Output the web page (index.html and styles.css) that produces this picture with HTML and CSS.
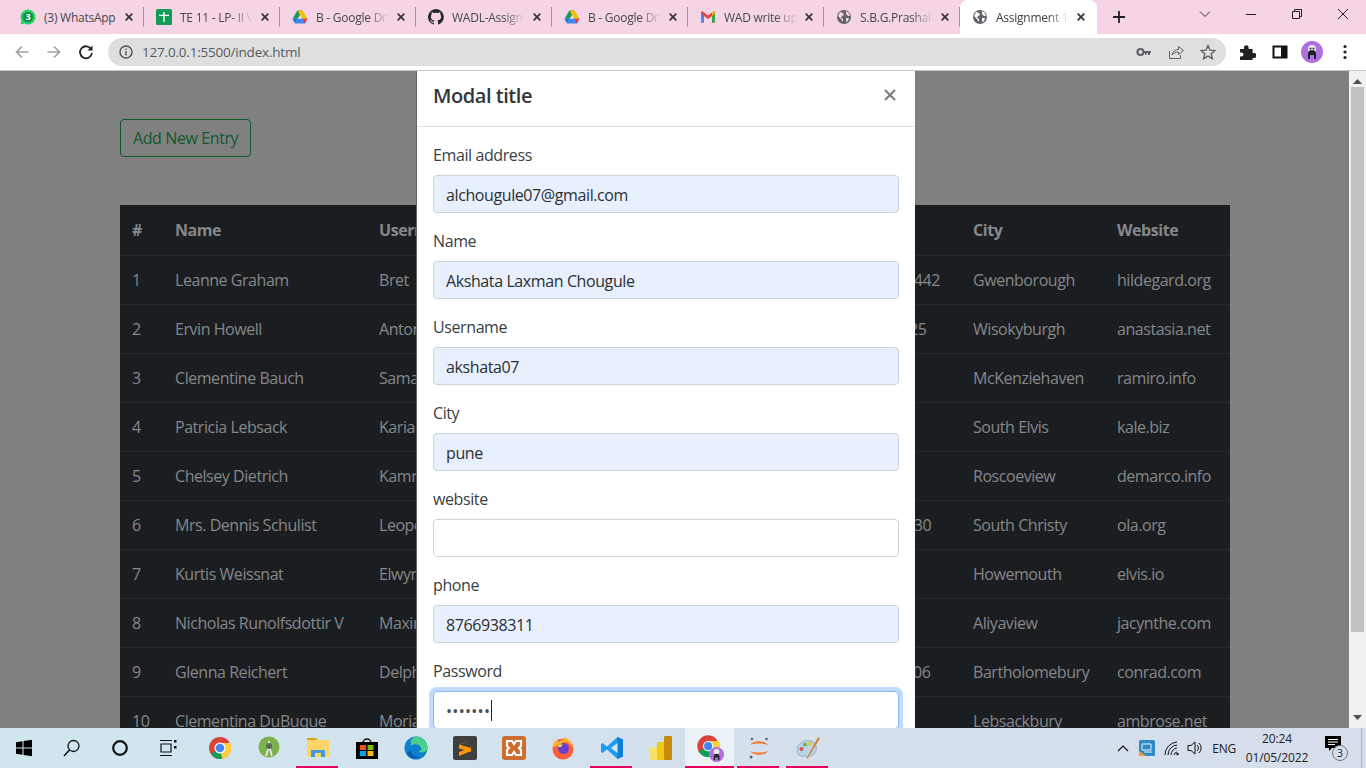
FILE: index.html
```html
<!DOCTYPE html>
<html lang="en">
<head>
  <meta charset="UTF-8">
  <meta name="viewport" content="width=device-width, initial-scale=1.0">
  <title>Assignment 1</title>
  <link rel="stylesheet" href="styles.css">
</head>
<body>
  <div class="tabstrip">
    <div class="tab">
      <svg class="fav" viewBox="0 0 16 16"><path d="M8 .5a7.500 7.500 0 0 0-6.400 11.300L.5 15.500l3.800-1A7.500 7.500 0 1 0 8 .5z" fill="#25d366"/><circle cx="8" cy="8" r="5.200" fill="#0f8f45"/><text x="8" y="11" text-anchor="middle" class="fav-num">3</text></svg>
      <span class="tab-title">(3) WhatsApp</span><svg class="tab-x" viewBox="0 0 8 8"><path d="M.7.7l6.600 6.600M7.300.7L.7 7.300"/></svg>
    </div>
    <div class="tab">
      <svg class="fav" viewBox="0 0 16 16"><rect width="16" height="16" rx="1.500" fill="#0f9d58"/><path d="M7.300 3h1.400v2.700H13v1.400H8.700V13H7.300V7.100H3V5.700h4.300z" fill="#fff"/></svg>
      <span class="tab-title fade">TE 11 - LP- II Viva</span><svg class="tab-x" viewBox="0 0 8 8"><path d="M.7.7l6.600 6.600M7.300.7L.7 7.300"/></svg>
    </div>
    <div class="tab">
      <svg class="fav" viewBox="0 0 16 16"><path d="M5.500 1.500h5L5.700 9.800H.5z" fill="#0f9d58"/><path d="M5.500 1.500h5l5 8.300h-5z" fill="#fbbc04"/><path d="M3 14.500l2.700-4.700h9.800L13 14.500z" fill="#4285f4"/><path d="M.5 9.800h5.200L3 14.500z" fill="#1a73e8"/><path d="M10.500 9.800h5L13 14.500z" fill="#ea4335"/></svg>
      <span class="tab-title fade">B - Google Drive</span><svg class="tab-x" viewBox="0 0 8 8"><path d="M.7.7l6.600 6.600M7.300.7L.7 7.300"/></svg>
    </div>
    <div class="tab">
      <svg class="fav" viewBox="0 0 16 16"><path fill="#24292f" d="M8 0a8 8 0 0 0-2.500 15.600c.4.100.5-.2.500-.4v-1.400c-2.200.5-2.700-1-2.700-1-.4-.9-.9-1.200-.9-1.200-.7-.5.100-.5.100-.5.8.100 1.200.8 1.200.8.700 1.200 1.900.9 2.300.7.100-.5.300-.9.500-1.100-1.800-.2-3.600-.9-3.600-4 0-.9.300-1.600.8-2.100-.1-.2-.4-1 .1-2.100 0 0 .7-.2 2.200.8a7.600 7.600 0 0 1 4 0c1.500-1 2.200-.8 2.200-.8.400 1.100.2 1.900.1 2.100.5.600.8 1.300.8 2.100 0 3.100-1.900 3.700-3.700 3.900.3.300.6.800.6 1.500v2.200c0 .2.100.5.600.4A8 8 0 0 0 8 0z"/></svg>
      <span class="tab-title fade">WADL-Assignment</span><svg class="tab-x" viewBox="0 0 8 8"><path d="M.7.7l6.600 6.600M7.300.7L.7 7.300"/></svg>
    </div>
    <div class="tab">
      <svg class="fav" viewBox="0 0 16 16"><path d="M5.500 1.500h5L5.700 9.800H.5z" fill="#0f9d58"/><path d="M5.500 1.500h5l5 8.300h-5z" fill="#fbbc04"/><path d="M3 14.500l2.700-4.700h9.800L13 14.500z" fill="#4285f4"/><path d="M.5 9.800h5.200L3 14.500z" fill="#1a73e8"/><path d="M10.500 9.800h5L13 14.500z" fill="#ea4335"/></svg>
      <span class="tab-title fade">B - Google Drive</span><svg class="tab-x" viewBox="0 0 8 8"><path d="M.7.7l6.600 6.600M7.300.7L.7 7.300"/></svg>
    </div>
    <div class="tab">
      <svg class="fav" viewBox="0 0 16 16"><path d="M1 3.500v10h3V7l4 3 4-3v6.500h3v-10L14 2 8 6.500 2 2z" fill="#ea4335"/><path d="M1 3.500v10h3V7z" fill="#4285f4"/><path d="M12 7v6.500h3v-10z" fill="#34a853"/><path d="M14 2l1 1.500L12 7V3.500z" fill="#fbbc04"/></svg>
      <span class="tab-title fade">WAD write up - m</span><svg class="tab-x" viewBox="0 0 8 8"><path d="M.7.7l6.600 6.600M7.300.7L.7 7.300"/></svg>
    </div>
    <div class="tab">
      <svg class="fav" viewBox="0 0 16 16"><circle cx="8" cy="8" r="7" fill="#5f6368"/><path d="M4 3l3 1 1 2-2 1-1 2 2 1v3L4 9 2 7zM10 2l3 2 1 3-2 0-2-2zM10 9l3 0-1 3-2 1z" fill="#f5d5e5"/></svg>
      <span class="tab-title fade">S.B.G.Prashala</span><svg class="tab-x" viewBox="0 0 8 8"><path d="M.7.7l6.600 6.600M7.300.7L.7 7.300"/></svg>
    </div>
    <div class="tab tab-active">
      <svg class="fav" viewBox="0 0 16 16"><circle cx="8" cy="8" r="7" fill="#5f6368"/><path d="M4 3l3 1 1 2-2 1-1 2 2 1v3L4 9 2 7zM10 2l3 2 1 3-2 0-2-2zM10 9l3 0-1 3-2 1z" fill="#fff"/></svg>
      <span class="tab-title fade">Assignment 1 page</span><svg class="tab-x" viewBox="0 0 8 8"><path d="M.7.7l6.600 6.600M7.300.7L.7 7.300"/></svg>
    </div>
    <svg class="new-tab" viewBox="0 0 12 12"><path d="M6 0v12M0 6h12" stroke="#202124" stroke-width="1.800" fill="none"/></svg>
    <div class="win-controls">
      <svg viewBox="0 0 12 12"><path d="M1 3.500l5 5 5-5" stroke="#333" fill="none"/></svg>
      <svg viewBox="0 0 12 12"><path d="M1 6.500h10" stroke="#222" fill="none"/></svg>
      <svg viewBox="0 0 12 12"><path d="M1.500 3.500h7v7h-7zM3.500 3.500v-2h7v7h-2" stroke="#222" fill="none"/></svg>
      <svg viewBox="0 0 12 12"><path d="M1 1l10 10M11 1L1 11" stroke="#222" fill="none"/></svg>
    </div>
  </div>

  <div class="toolbar">
    <svg class="tool-btn" viewBox="0 0 16 16"><path d="M14.500 8H2.500M8 2.500L2.500 8 8 13.500" stroke="#a2a2a2" stroke-width="1.700" fill="none"/></svg>
    <svg class="tool-btn" viewBox="0 0 16 16"><path d="M1.500 8h12M8 2.500L13.500 8 8 13.500" stroke="#a2a2a2" stroke-width="1.700" fill="none"/></svg>
    <svg class="tool-btn" viewBox="0 0 16 16"><path d="M13.200 5.200A6 6 0 1 0 14 9" stroke="#222" stroke-width="1.800" fill="none"/><path d="M14.500 1.500v5h-5z" fill="#222"/></svg>
    <div class="omnibox">
      <svg class="omni-info" viewBox="0 0 14 14"><circle cx="7" cy="7" r="6" stroke="#555" stroke-width="1.400" fill="none"/><path d="M7 6v4.500M7 3.500v1.400" stroke="#555" stroke-width="1.400"/></svg>
      <span class="url">127.0.0.1:5500/index.html</span>
      <div class="omni-actions">
        <svg viewBox="0 0 16 16"><circle cx="4.500" cy="8" r="3" fill="none" stroke="#5f6368" stroke-width="2.200"/><path d="M7 7h8v2h-1v2h-2V9h-1v1.500H9V9H7z" fill="#5f6368"/></svg>
        <svg viewBox="0 0 16 16"><path d="M1.500 7v7.500h11V11" stroke="#5f6368" fill="none"/><path d="M4 11c.5-3.500 3-5.500 6.500-5.500V2.500L15.500 6.500l-5 4V8C7.500 8 5.500 9 4 11z" stroke="#5f6368" fill="none"/></svg>
        <svg viewBox="0 0 16 16"><path d="M8 1.500l2 4.600 5 .4-3.800 3.300 1.200 4.900L8 12.100l-4.400 2.600 1.200-4.900L1 6.500l5-.4z" stroke="#5f6368" stroke-width="1.400" fill="none"/></svg>
      </div>
    </div>
    <svg class="tool-ext" viewBox="0 0 16 16"><path d="M0 5h4V3.500a2.300 2.300 0 0 1 4.600 0V5h4v4H14a2.500 2.500 0 0 1 0 5h-1.400v2H0v-3.500h1.500a2 2 0 0 0 0-4H0z" fill="#202124"/></svg>
    <svg class="tool-ext" viewBox="0 0 16 16"><rect x="1.500" y="2.500" width="13" height="11" fill="none" stroke="#111" stroke-width="2"/><rect x="9" y="2.500" width="5" height="11" fill="#111"/></svg>
    <svg class="avatar" viewBox="0 0 22 22"><circle cx="11" cy="11" r="11" fill="#b06fe0"/><circle cx="11" cy="8" r="4" fill="#eee"/><circle cx="9.500" cy="7.500" r="1" fill="#222"/><circle cx="12.500" cy="7.500" r="1" fill="#222"/><path d="M7 18v-5a4 4 0 0 1 8 0v5h-2v-4h-4v4z" fill="#222"/></svg>
    <svg class="tool-dots" viewBox="0 0 4 16"><circle cx="2" cy="2.500" r="1.600" fill="#222"/><circle cx="2" cy="8" r="1.600" fill="#222"/><circle cx="2" cy="13.500" r="1.600" fill="#222"/></svg>
  </div>

  <div class="viewport">
    <main class="page">
      <button class="btn-add">Add New Entry</button>
      <table class="users">
        <colgroup>
          <col class="c-id"><col class="c-name"><col class="c-user"><col class="c-mail"><col class="c-phone"><col class="c-city"><col class="c-web">
        </colgroup>
        <thead>
          <tr><th>#</th><th>Name</th><th>Username</th><th>Email</th><th>Phone</th><th>City</th><th>Website</th></tr>
        </thead>
        <tbody>
          <tr><td>1</td><td>Leanne Graham</td><td>Bret</td><td>Sincere@april.biz</td><td>1-770-736-8031 x56442</td><td>Gwenborough</td><td>hildegard.org</td></tr>
          <tr><td>2</td><td>Ervin Howell</td><td>Antonette</td><td>Shanna@melissa.tv</td><td>010-692-6593 x09125</td><td>Wisokyburgh</td><td>anastasia.net</td></tr>
          <tr><td>3</td><td>Clementine Bauch</td><td>Samantha</td><td>Nathan@yesenia.net</td><td>1-463-123-4447</td><td>McKenziehaven</td><td>ramiro.info</td></tr>
          <tr><td>4</td><td>Patricia Lebsack</td><td>Karianne</td><td>Julianne.OConner@kory.org</td><td>493-170-9623</td><td>South Elvis</td><td>kale.biz</td></tr>
          <tr><td>5</td><td>Chelsey Dietrich</td><td>Kamren</td><td>Lucio_Hettinger@annie.ca</td><td>(254)954-1289</td><td>Roscoeview</td><td>demarco.info</td></tr>
          <tr><td>6</td><td>Mrs. Dennis Schulist</td><td>Leopoldo_Corkery</td><td>Karley_Dach@jasper.info</td><td>1-477-935-8478 x6430</td><td>South Christy</td><td>ola.org</td></tr>
          <tr><td>7</td><td>Kurtis Weissnat</td><td>Elwyn.Skiles</td><td>Telly.Hoeger@billy.biz</td><td>210.067.6132</td><td>Howemouth</td><td>elvis.io</td></tr>
          <tr><td>8</td><td>Nicholas Runolfsdottir V</td><td>Maxime_Nienow</td><td>Sherwood@rosamond.me</td><td>586.493.6943</td><td>Aliyaview</td><td>jacynthe.com</td></tr>
          <tr><td>9</td><td>Glenna Reichert</td><td>Delphine</td><td>Chaim_McDermott@dana.io</td><td>(775)976-6794 x41206</td><td>Bartholomebury</td><td>conrad.com</td></tr>
          <tr><td>10</td><td>Clementina DuBuque</td><td>Moriah.Stanton</td><td>Rey.Padberg@karina.biz</td><td>024-648-3804</td><td>Lebsackbury</td><td>ambrose.net</td></tr>
        </tbody>
      </table>
    </main>

    <div class="scrollbar">
      <svg class="arrow" viewBox="0 0 9 5"><path d="M4.500 0L9 5H0z" fill="#505050"/></svg>
      <div class="thumb-track"><div class="thumb"></div></div>
      <svg class="arrow" viewBox="0 0 9 5"><path d="M0 0h9L4.500 5z" fill="#505050"/></svg>
    </div>

    <div class="modal">
      <div class="modal-header">
        <h5 class="modal-title">Modal title</h5>
        <svg class="modal-close" viewBox="0 0 12 12"><path d="M1 1l10 10M11 1L1 11" stroke="#7c7f82" stroke-width="2.200" fill="none"/></svg>
      </div>
      <form class="modal-body">
        <div class="field"><label>Email address</label><input class="autofilled" value="alchougule07@gmail.com"></div>
        <div class="field"><label>Name</label><input class="autofilled" value="Akshata Laxman Chougule"></div>
        <div class="field"><label>Username</label><input class="autofilled" value="akshata07"></div>
        <div class="field"><label>City</label><input class="autofilled" value="pune"></div>
        <div class="field"><label>website</label><input value=""></div>
        <div class="field"><label>phone</label><input class="autofilled" value="8766938311"></div>
        <div class="field"><label>Password</label>
          <div class="pw-wrap"><input class="focused" type="password" value="akshata"><span class="caret"></span></div>
        </div>
      </form>
    </div>
  </div>

  <footer class="taskbar">
    <div class="task-left">
      <span class="task"><svg viewBox="0 0 18 18"><path d="M1 3.200l6.500-1v6.300H1zM8.500 2l8.500-1.300v7.800H8.500zM1 9.500h6.500v6.300l-6.500-1zM8.500 9.500H17v7.800L8.500 16z" fill="#000"/></svg></span>
      <span class="task"><svg viewBox="0 0 18 18"><circle cx="10.500" cy="7" r="5.500" stroke="#111" stroke-width="1.300" fill="none"/><path d="M6.500 11l-5.500 6" stroke="#111" stroke-width="1.500"/></svg></span>
      <span class="task"><svg viewBox="0 0 18 18"><circle cx="9" cy="9" r="6.800" stroke="#111" stroke-width="2.200" fill="none"/></svg></span>
      <span class="task"><svg viewBox="0 0 18 18"><path d="M1 1.500h12M1 16.500h12M2 5h10v8H2z" stroke="#111" stroke-width="1.200" fill="none"/><rect x="15" y="1" width="2.500" height="2.500" fill="#111"/><rect x="15" y="7" width="2.500" height="2.500" fill="#111"/></svg></span>
      <span class="task task-big first-big"><svg viewBox="0 0 24 24"><circle cx="12" cy="12" r="11" fill="#db4437"/><path d="M12 12L3 17.500A11 11 0 0 0 14 23z" fill="#0f9d58"/><path d="M12 7h10a11 11 0 0 1-8 16z" fill="#ffcd40"/><circle cx="12" cy="12" r="5.500" fill="#fff"/><circle cx="12" cy="12" r="4.300" fill="#4285f4"/></svg></span>
      <span class="task task-big"><svg viewBox="0 0 24 24"><circle cx="12" cy="11" r="10.500" fill="#7cb24b"/><path d="M12 5v3M9 20l3-10 3 10" stroke="#e6e6e6" stroke-width="1.800" fill="none"/><circle cx="12" cy="10" r="3" fill="#5b6b4f"/></svg></span>
      <span class="task task-big on"><svg viewBox="0 0 24 24"><path d="M1 2h9l2 2H1z" fill="#d9a520"/><path d="M1 4h22v17H1z" fill="#fbd667"/><path d="M5 21v-7h14v7h-4v-4H9v4z" fill="#3f9ade"/></svg></span>
      <span class="task task-big"><svg viewBox="0 0 24 24"><path d="M8 7a4 4 0 0 1 8 0" stroke="#111" stroke-width="1.500" fill="none"/><path d="M1 6h22v17H1z" fill="#000"/><rect x="5" y="9" width="6" height="5" fill="#f25022"/><rect x="12.500" y="9" width="6" height="5" fill="#7fba00"/><rect x="5" y="15" width="6" height="5" fill="#00a4ef"/><rect x="12.500" y="15" width="6" height="5" fill="#ffb900"/></svg></span>
      <span class="task task-big"><svg viewBox="0 0 24 24"><circle cx="12" cy="12" r="11.500" fill="#0f7fcf"/><path d="M12 .5A11.500 11.500 0 0 1 23.500 12c0 3-3 4.500-6 4.500-2.500 0-3.500-1-3.500-1 3 0 3.500-2 3-3.500C16 8 10 7 6.500 10 8 6 4 3 12 .5z" fill="#4bd08a"/><path d="M7 14c0 5 5 8 10 7-2 2-11 3-14-4z" fill="#0a5ca8"/></svg></span>
      <span class="task task-big"><svg viewBox="0 0 24 24"><rect width="24" height="24" rx="2" fill="#3f3f3f"/><path d="M18 4L6 9v3.500l12 3.500v-4L6 8.500M18 11.500L6 16v4l12-5" fill="#ff9800"/></svg></span>
      <span class="task task-big"><svg viewBox="0 0 24 24"><rect width="24" height="24" rx="3" fill="#cf6c2c"/><path d="M5 5h5l2 3 2-3h5v5l-2 2 2 2v5h-5l-2-3-2 3H5v-5l2-2-2-2z" fill="none" stroke="#fff" stroke-width="2.200"/></svg></span>
      <span class="task task-big"><svg viewBox="0 0 24 24"><circle cx="12" cy="13" r="10.500" fill="#ff5c39"/><circle cx="12.500" cy="12.500" r="5.500" fill="#6a3fd0"/><path d="M1.500 11C2 6 5 4 7 3.500 6.500 5 7 6 8 6.500 9.500 4 13 4 14 1c3 2 8 5 8 11-2-4-5-6-8-6-2 0-3.500 1-4 2-2 0-4 .5-5 2-.5.500-2 1-3.500 1z" fill="#ffb52e"/><path d="M7 8.500h5l-2 2.500H7z" fill="#ffcf50"/></svg></span>
      <span class="task task-big on"><svg viewBox="0 0 24 24"><path d="M17.500 1L23 3.500v17L17.500 23 7 13.500 2.500 17 1 16V8l1.500-1L7 10.500z" fill="#1f9cf0"/><path d="M17.500 1L23 3.500v17L17.500 23z" fill="#0f7fd0"/><path d="M17.500 7v10L11 12z" fill="#d2e5ee"/></svg></span>
      <span class="task task-big"><svg viewBox="0 0 24 24"><rect x="1" y="11" width="8" height="13" rx="1" fill="#f7e36b"/><rect x="8" y="6" width="8" height="18" rx="1" fill="#f2c811"/><rect x="15" y="0" width="8" height="24" rx="1" fill="#c98c0a"/></svg></span>
      <span class="task task-big task-active"><svg class="task-chrome" viewBox="0 0 32 32"><circle cx="14" cy="14" r="11.500" fill="#db4437"/><path d="M14 14L4 19.500A11.500 11.500 0 0 0 16 25.500z" fill="#0f9d58"/><path d="M14 8.500h11.500a11.500 11.500 0 0 1-9 17z" fill="#ffcd40"/><circle cx="14" cy="14" r="5.500" fill="#fff"/><circle cx="14" cy="14" r="4.300" fill="#4285f4"/><circle cx="23" cy="23" r="8" fill="#b06fe0"/><circle cx="23" cy="20" r="3" fill="#eee"/><path d="M20 29v-4a3 3 0 0 1 6 0v4h-1.500v-3h-3v3z" fill="#222"/></svg></span>
      <span class="task task-big on"><svg viewBox="0 0 24 24"><path d="M3 9c4-5 14-5 18 0-4-2-14-2-18 0zM3 15c4 5 14 5 18 0-4 2-14 2-18 0z" fill="#f37626"/><circle cx="5" cy="3" r="1.300" fill="#666"/><circle cx="19.500" cy="3" r="1.300" fill="#666"/><circle cx="4" cy="21" r="1.500" fill="#666"/></svg></span>
      <span class="task task-big on"><svg viewBox="0 0 24 24"><path d="M1 14C1 7 9 3 15 5c6 2 7 9 3 13-4 4-8 2-12 2-3 0-5-2-5-6z" fill="#b9d4e8" stroke="#7a97ad" stroke-width=".6"/><circle cx="5.500" cy="13" r="2" fill="#d9534f"/><circle cx="9" cy="8.500" r="2" fill="#6fb54a"/><circle cx="14" cy="7.500" r="2" fill="#f2c230"/><path d="M22 1l2 1.500L12 22l-2 1z" fill="#d08a3a"/></svg></span>
    </div>
    <div class="tray">
      <svg class="tray-up" viewBox="0 0 12 7"><path d="M1 6l5-5 5 5" stroke="#111" stroke-width="1.200" fill="none"/></svg>
      <svg class="tray-app" viewBox="0 0 16 16"><rect width="16" height="16" rx="1.500" fill="#2e8bc9"/><path d="M0 11l7 5H1.500A1.500 1.500 0 0 1 0 14.500z" fill="#f0a030"/><path d="M3 4h9v6H3zM5 12h8" fill="none" stroke="#e6f2fa"/></svg>
      <svg class="tray-icon" viewBox="0 0 16 16"><path d="M1 15A13 13 0 0 1 13 2M4 15A10 10 0 0 1 13 5M7 15a7 7 0 0 1 6-7M10 15a4 4 0 0 1 3-3" stroke="#111" fill="none"/><circle cx="13.500" cy="14" r="1.200" fill="#111"/></svg>
      <svg class="tray-icon tray-vol" viewBox="0 0 16 16"><path d="M1 5.500h3L8 2v12L4 10.500H1z" stroke="#111" fill="none"/><path d="M10 5a4 4 0 0 1 0 6M12 3a7 7 0 0 1 0 10" stroke="#111" fill="none"/></svg>
      <span class="tray-lang">ENG</span>
      <div class="clock"><span>20:24</span><span>01/05/2022</span></div>
      <div class="notify">
        <svg viewBox="0 0 16 16"><path d="M0 0h16v12H7l-3 3v-3H0z" fill="#000"/><path d="M3 3.500h10M3 6h10M3 8.500h7" stroke="#fff"/></svg>
        <span class="notify-count">3</span>
      </div>
      <span class="show-desktop"></span>
    </div>
  </footer>
</body>
</html>
```

FILE: styles.css
```css
* {
  box-sizing: border-box;
}
html, body {
  height: 100%;
}
body {
  margin: 0;
  overflow: hidden;
  display: flex;
  flex-direction: column;
  font-family: "Open Sans", "Noto Sans", sans-serif;
  color: #212529;
}

/* tabs */
.tabstrip {
  height: 34px;
  flex: none;
  display: flex;
  align-items: center;
  padding-left: 8px;
  background: #f5d5e5;
}
.tab {
  width: 136px;
  height: 34px;
  flex: none;
  display: flex;
  align-items: center;
  padding: 0 11px 0 12px;
  background: linear-gradient(#a69aa1, #a69aa1) right center / 1px 20px no-repeat;
  font-size: 12px;
  letter-spacing: -0.25px;
  color: #45494d;
}
.tab-active {
  width: 137px;
  padding-right: 12px;
  background: #fff;
  border-radius: 8px 8px 0 0;
  color: #3c4043;
}
.fav {
  width: 16px;
  height: 16px;
  flex: none;
  margin-right: 8px;
}
.fav-num {
  font-size: 9px;
  font-weight: 700;
  fill: #fff;
  letter-spacing: 0;
}
.tab-title {
  flex: 1;
  min-width: 0;
  margin-right: 4px;
  white-space: nowrap;
  overflow: hidden;
}
.fade {
  margin-right: 8px;
  -webkit-mask-image: linear-gradient(to right, #000 70%, transparent);
  mask-image: linear-gradient(to right, #000 70%, transparent);
}
.tab-x {
  width: 8px;
  height: 8px;
  flex: none;
  stroke: #333;
  stroke-width: 1.700;
  fill: none;
}
.new-tab {
  width: 12px;
  height: 12px;
  margin-left: 16px;
}
.win-controls {
  margin-left: auto;
  display: flex;
  align-items: center;
  align-self: flex-start;
  gap: 34px;
  padding: 8px 17px 0 0;
}
.win-controls svg {
  width: 12px;
  height: 12px;
}

/* toolbar */
.toolbar {
  height: 37px;
  flex: none;
  display: flex;
  align-items: center;
  padding: 0 0 1px 14px;
  background: #fff;
  border-bottom: 1px solid #c6c6c6;
}
.tool-btn {
  width: 16px;
  height: 16px;
  margin-right: 16px;
}
.omnibox {
  width: 1118px;
  height: 28px;
  margin-left: -2px;
  display: flex;
  align-items: center;
  padding: 0 10px 0 11px;
  border-radius: 14px;
  background: #dfdfdf;
}
.omni-info {
  width: 14px;
  height: 14px;
  margin-right: 9px;
}
.url {
  font-size: 13.5px;
  letter-spacing: -0.2px;
  color: #56595c;
}
.omni-actions {
  margin-left: auto;
  display: flex;
  gap: 16px;
}
.omni-actions svg {
  width: 16px;
  height: 16px;
}
.tool-ext {
  width: 16px;
  height: 16px;
  margin-left: 14px;
  margin-right: 2px;
}
.avatar {
  width: 22px;
  height: 22px;
  margin-left: 11px;
}
.tool-dots {
  width: 4px;
  height: 16px;
  margin-left: 20px;
}

/* page behind the backdrop */
.viewport {
  flex: 1;
  min-height: 0;
  display: flex;
  position: relative;
  overflow: hidden;
}
.page {
  flex: 1;
  min-width: 0;
  padding: 48px 119px 0 120px;
  background: #808080;
}
.btn-add {
  display: block;
  height: 38px;
  padding: 0 12px;
  font: inherit;
  font-size: 16px;
  letter-spacing: -0.4px;
  color: #0f5a2c;
  background: transparent;
  border: 1px solid #0f5a2c;
  border-radius: 4px;
}
.users {
  width: 1110px;
  margin-top: 48px;
  border-collapse: collapse;
  table-layout: fixed;
  background: #1b1e21;
  font-size: 16px;
  letter-spacing: -0.45px;
  color: #85878a;
}
.c-id { width: 43px; }
.c-name { width: 204px; }
.c-user { width: 190px; }
.c-mail { width: 206px; }
.c-phone { width: 198px; }
.c-city { width: 144px; }
.c-web { width: 125px; }
.users th, .users td {
  height: 49px;
  padding: 0 12px;
  text-align: left;
  white-space: nowrap;
  overflow: hidden;
  border-bottom: 1px solid #26292d;
}
.users th {
  height: 50px;
  font-weight: 700;
}

.scrollbar {
  width: 17px;
  flex: none;
  display: flex;
  flex-direction: column;
  align-items: center;
  padding: 8px 0;
  background: #f1f1f1;
}
.arrow {
  width: 9px;
  height: 5px;
  flex: none;
}
.thumb-track {
  flex: 1;
  width: 100%;
  padding: 3px 2px 0;
}
.thumb {
  height: 545px;
  background: #c1c1c1;
}

/* modal */
.modal {
  position: absolute;
  top: 0;
  left: 417px;
  width: 498px;
  background: #fff;
  box-shadow: -1px 0 0 #666;
}
.modal-header {
  height: 56px;
  display: flex;
  align-items: center;
  justify-content: space-between;
  padding: 0 19px 6px 16px;
  border-bottom: 1px solid #dee2e6;
}
.modal-title {
  margin: 0;
  font-size: 20px;
  font-weight: 600;
  letter-spacing: -0.45px;
  line-height: 1.5;
  color: #32363a;
}
.modal-close {
  width: 12px;
  height: 12px;
  margin-bottom: 2px;
}
.modal-body {
  padding: 16px;
}
.field {
  margin-bottom: 16px;
}
.field label {
  display: block;
  height: 24px;
  margin-bottom: 8px;
  font-size: 16px;
  line-height: 24px;
  letter-spacing: -0.4px;
  color: #3a3f44;
}
.field input {
  display: block;
  width: 100%;
  height: 38px;
  padding: 7px 12px 5px;
  font: inherit;
  font-size: 16px;
  letter-spacing: -0.4px;
  color: #2b2f33;
  background: #fff;
  border: 1px solid #ced4da;
  border-radius: 4px;
  outline: none;
}
.field .autofilled {
  background: #e8f0fe;
}
.field .focused {
  border-color: #86b7fe;
  box-shadow: 0 0 0 4px rgba(13, 110, 253, .25);
  color: #495057;
  letter-spacing: .3px;
}
.pw-wrap {
  position: relative;
}
.caret {
  position: absolute;
  left: 58px;
  top: 9px;
  width: 1px;
  height: 21px;
  background: #212529;
}

/* taskbar */
.taskbar {
  height: 40px;
  flex: none;
  display: flex;
  background: linear-gradient(to right, #cfe6ef, #d5e0ec 60%, #d6deeb);
}
.task-left {
  display: flex;
}
.task {
  width: 48px;
  height: 40px;
  display: flex;
  align-items: center;
  justify-content: center;
  padding-top: 2px;
  border-bottom: 2px solid transparent;
}
.task svg {
  width: 18px;
  height: 18px;
}
.task-big {
  width: 49px;
}
.first-big {
  margin-left: 3px;
}
.task-big svg {
  width: 24px;
  height: 24px;
}
.task.on {
  border-image: linear-gradient(to right, transparent 4px, #e6005c 4px, #e6005c 44px, transparent 44px) 1;
}
.task-active {
  background: #eaf2f6;
  border-bottom-color: #e6005c;
}
.task .task-chrome {
  width: 30px;
  height: 30px;
}
.tray {
  margin-left: auto;
  display: flex;
  align-items: center;
  font-size: 12px;
  color: #222;
}
.tray-up {
  width: 12px;
  height: 7px;
  margin-right: 10px;
}
.tray-app {
  width: 16px;
  height: 16px;
  margin-right: 9px;
}
.tray-icon {
  width: 16px;
  height: 16px;
  margin-right: 7px;
}
.tray-vol {
  margin-right: 9px;
}
.tray-lang {
  margin-right: 5px;
  letter-spacing: -0.2px;
}
.clock {
  display: flex;
  flex-direction: column;
  align-items: center;
  width: 72px;
  line-height: 19px;
  margin-right: 12px;
  letter-spacing: -0.1px;
}
.notify {
  position: relative;
  width: 24px;
  height: 24px;
}
.notify svg {
  width: 16px;
  height: 16px;
  position: absolute;
  left: 0;
  top: 0;
}
.notify-count {
  position: absolute;
  left: 7px;
  top: 9px;
  width: 16px;
  height: 16px;
  line-height: 14px;
  text-align: center;
  border: 1px solid #777;
  border-radius: 50%;
  background: #d6deeb;
  font-size: 11px;
}
.show-desktop {
  width: 5px;
  height: 40px;
  margin-left: 12px;
  border-left: 1px solid #aab6c4;
}
```
